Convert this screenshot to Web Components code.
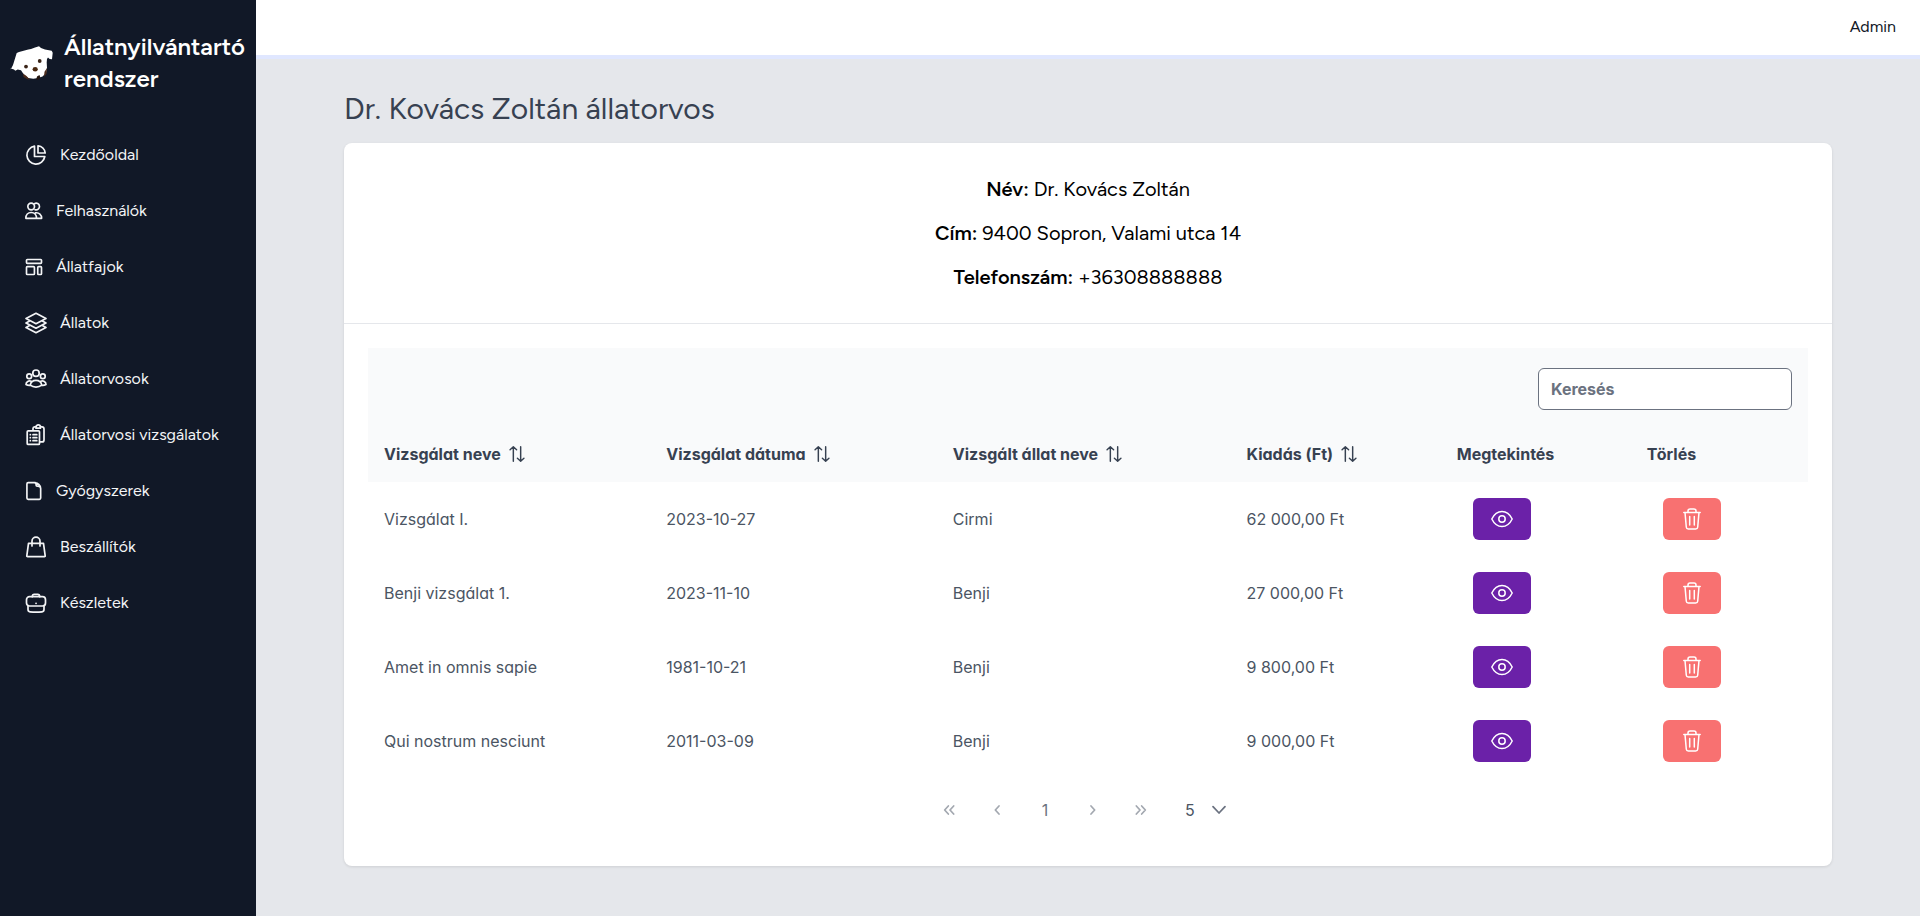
<!DOCTYPE html>
<html lang="hu">
<head>
<meta charset="utf-8">
<meta name="viewport" content="width=device-width, initial-scale=1">
<title>Állatnyilvántartó rendszer</title>
<style>
  html, body { margin: 0; height: 100%; }
  body { font-family: Figtree, Lato, sans-serif; font-size: 16px; line-height: 24px; color: #111827; background: #e5e7eb; }
</style>
</head>
<body>
<app-shell>
  <app-sidebar slot="sidebar">
    <span slot="brand">Állatnyilvántartó rendszer</span>
    <nav-item icon="pie">Kezdőoldal</nav-item>
    <nav-item icon="users" small>Felhasználók</nav-item>
    <nav-item icon="layout" small>Állatfajok</nav-item>
    <nav-item icon="layers">Állatok</nav-item>
    <nav-item icon="group">Állatorvosok</nav-item>
    <nav-item icon="clipboard">Állatorvosi vizsgálatok</nav-item>
    <nav-item icon="file" small>Gyógyszerek</nav-item>
    <nav-item icon="bag">Beszállítók</nav-item>
    <nav-item icon="case">Készletek</nav-item>
  </app-sidebar>
  <app-topbar slot="topbar">Admin</app-topbar>
  <page-title>Dr. Kovács Zoltán állatorvos</page-title>
  <content-card>
    <info-list slot="info">
      <info-line label="Név:">Dr. Kovács Zoltán</info-line>
      <info-line label="Cím:">9400 Sopron, Valami utca 14</info-line>
      <info-line label="Telefonszám:">+36308888888</info-line>
    </info-list>
    <exam-table></exam-table>
    <page-paginator></page-paginator>
  </content-card>
</app-shell>

<script>
const define = (name, html, setup) => {
  const template = document.createElement('template');
  template.innerHTML = html;
  customElements.define(name, class extends HTMLElement {
    constructor() {
      super();
      this.attachShadow({ mode: 'open' }).append(template.content.cloneNode(true));
    }
    connectedCallback() { if (setup) setup(this, this.shadowRoot); }
  });
};

const ICONS = {
  pie: '<path d="M10.5 3.2a9 9 0 1 0 10.3 10.3h-10.3z"/><path d="M14 2.8V10h7.2A8 8 0 0 0 14 2.8z"/>',
  users: '<circle cx="8.6" cy="6.6" r="4"/><path d="M12.6 3.2a4 4 0 1 1 .6 7.2M2.2 20.8c0-4.200 2.600-7 6.400-7s6.400 2.800 6.400 7zM13.800 14.200c4.200-.6 7.400 2.300 7.400 6.600H15"/>',
  layout: '<rect x="3" y="3" width="18" height="4.600" rx="1"/><rect x="3" y="11.500" width="9.500" height="9.500" rx="1"/><rect x="16.500" y="11.500" width="4.500" height="9.500" rx="1"/>',
  layers: '<path d="M12 2.300l10 5.200-10 5.200L2 7.500z"/><path d="M5.200 10.300L2 12l10 5.200L22 12l-3.200-1.700"/><path d="M5.200 14.800L2 16.500l10 5.200 10-5.200-3.200-1.700"/>',
  group: '<circle cx="12" cy="6.200" r="3.200"/><circle cx="5.200" cy="9.200" r="2.400"/><circle cx="18.800" cy="9.200" r="2.400"/><path d="M6.200 18.200a5.900 5.900 0 0 1 11.600 0c-3.300 2.600-8.300 2.600-11.600 0zM7.200 14.300c-2.300-1.100-5.200.4-5.200 3.300 1.200.7 2.700 1 4.200.8M16.800 14.300c2.300-1.100 5.200.4 5.200 3.300-1.200.7-2.700 1-4.200.8"/>',
  clipboard: '<path d="M9 7V5.600C9 4.500 9.800 3.900 10.700 3.800l1.300-.1M16.500 3.700l1.500.1c1.200.1 2 1 2 2.100v11c0 1.200-.9 2-2 2h-2"/><path d="M12 5.200V4.100a2.200 2.200 0 0 1 4.400 0v1.100z"/><rect x="3.200" y="7.800" width="12.300" height="13.600" rx="1"/><path d="M6.300 11.700h.1M6.300 14.700h.1M6.300 17.700h.1M9 11.700h3.800M9 14.700h3.800M9 17.700h3.800"/>',
  file: '<path d="M13.500 2H5a1.500 1.500 0 0 0-1.500 1.500v17A1.500 1.500 0 0 0 5 22h13.500a1.500 1.500 0 0 0 1.500-1.500V9M12.500 2c1.800 0 2.200 1 2.200 3.800C17.500 5.800 20 6 20 9c0-4-3.500-7-7.500-7z"/>',
  bag: '<path d="M8 11V6.200a4 4 0 0 1 8 0V11"/><path d="M4.500 8.300h15l1.700 12.500c.1.600-.3.900-.8.900H3.600c-.5 0-.9-.3-.8-.9z"/>',
  case: '<path d="M8.300 5.700c0-1.800.7-2.400 2-2.400h3.400c1.300 0 2 .6 2 2.400"/><rect x="2.500" y="5.700" width="19" height="9.300" rx="3"/><path d="M4 14.600v4c0 1.300.9 2.100 2 2.200 4 .5 8 .5 12 0 1.100-.1 2-.9 2-2.200v-4M12 12.300h.1"/>',
  eye: '<path d="M1.800 12C4 7.500 7.500 4.500 12 4.500s8 3 10.200 7.500C20 16.500 16.500 19.500 12 19.500S4 16.500 1.800 12z"/><circle cx="12" cy="12" r="3.200"/>',
  trash: '<path d="M3.800 5.500h16.400M8 5.200V4a2 2 0 0 1 2-2h4a2 2 0 0 1 2 2v1.200M5 5.500l1.300 14.700c.1 1.200.8 1.800 2 1.800h7.400c1.200 0 1.900-.6 2-1.800L19 5.500M9.700 9.500v8.500M14.300 9.500v8.500"/>',
  sort: '<path d="M6.500 22.800V1.400M1.600 5.600l4.900-4.400 4.900 4.400M17.500 1.200v21.400M12.600 18.400l4.900 4.400 4.900-4.400"/>',
  first: '<path d="M11 6l-5.500 6 5.500 6M19 6l-5.500 6 5.500 6"/>',
  prev: '<path d="M15 6l-5.500 6 5.500 6"/>',
  next: '<path d="M9 6l5.500 6L9 18"/>',
  last: '<path d="M5 6l5.500 6L5 18M13 6l5.500 6-5.500 6"/>',
  down: '<path d="M3 7l9 9.500L21 7"/>'
};

define('ui-icon', `
<style>
  :host { display: block; flex: none; width: var(--icon-size, 24px); height: var(--icon-size, 24px); }
  svg { display: block; width: 100%; height: 100%; overflow: visible; fill: none; stroke: currentColor; stroke-width: var(--icon-stroke, 1.5); stroke-linecap: round; stroke-linejoin: round; }
</style>
<svg viewBox="0 0 24 24" aria-hidden="true"></svg>`, (el, root) => {
  root.querySelector('svg').innerHTML = ICONS[el.getAttribute('name')];
});

define('app-shell', `
<style>
  :host { display: grid; grid-template-columns: 256px minmax(0, 1fr); min-height: 100%; }
  .page { display: flex; flex-direction: column; }
  main { box-sizing: border-box; width: 100%; max-width: 1536px; margin: 0 auto; padding: 32px 24px; }
</style>
<slot name="sidebar"></slot>
<div class="page"><slot name="topbar"></slot><main><slot></slot></main></div>`);

define('app-logo', `
<style>
  :host { display: block; flex: none; width: 44px; height: 36px; }
  svg { display: block; width: 100%; height: 100%; }
</style>
<svg viewBox="0 0 44 36" aria-hidden="true">
  <path fill="#fff" d="M1.700 24.500L4 20l3.700-12L10 7l9.300-2.400L22 4l4-1.500 4-1.300 2 1.800 4 1.500 6.700 1.200 1 2-.7 6.600-2.300-.3-1.700-1.500-1 1.500-.3 3.500.3 5.500-1 5-3.500 3.500-4.500 1.500-4.700.7-5-.8-4-2.600-3.300-5-3.300-.8-2.400 1.200-1.300-1.300-3.300-.9z"/>
  <path fill="#4b2a1a" d="M14 28.500l3.500 2.500 3.500 3.800-3-.8-3.500-2zM38 23l-.5 6-2.500 2.800.5-5z"/>
  <circle cx="17" cy="21.600" r="1.900" fill="#3a2418"/><circle cx="30.700" cy="16" r="1.900" fill="#3a2418"/>
  <ellipse cx="26.200" cy="24.300" rx="2.600" ry="2.200" fill="#4a2810"/><path fill="#24150e" d="M28 31.500l2.500-1.500.8 2.500-2 2.200-2-.2z"/>
</svg>`);

define('app-sidebar', `
<style>
  :host { display: block; background: #111827; color: #f3f4f6; }
  .brand { display: flex; align-items: center; gap: 11px; padding: 31px 9px 0; color: #fff; font-size: 24px; line-height: 32px; font-weight: 600; text-decoration: none; }
  nav { display: flex; flex-direction: column; gap: 8px; margin-top: 36px; }
</style>
<a class="brand" href="#"><app-logo></app-logo><slot name="brand"></slot></a>
<nav><slot></slot></nav>`);

define('nav-item', `
<style>
  :host { display: block; --icon-stroke: 1.7; }
  :host([small]) { --icon-size: 20px; --icon-stroke: 2; }
  a { display: flex; align-items: center; gap: 12px; padding: 12px 24px; color: inherit; text-decoration: none; }
</style>
<a href="#"><ui-icon></ui-icon><span><slot></slot></span></a>`, (el, root) => {
  const icon = document.createElement('ui-icon');
  icon.setAttribute('name', el.getAttribute('icon'));
  root.querySelector('ui-icon').replaceWith(icon);
});

define('app-topbar', `
<style>
  :host { display: flex; justify-content: flex-end; padding: 15px 24px 16px; background: #fff; border-bottom: 4px solid #e0e7ff; }
  button { border: 0; padding: 0; background: none; font: inherit; color: inherit; }
</style>
<button type="button"><slot></slot></button>`);

define('page-title', `
<style>
  :host { display: block; margin-bottom: 16px; }
  h1 { margin: 0; font-size: 30px; line-height: 36px; font-weight: 400; color: #374151; }
</style>
<h1><slot></slot></h1>`);

define('content-card', `
<style>
  :host { display: block; background: #fff; border-radius: 8px; box-shadow: 0 1px 3px rgba(0,0,0,.1); }
  .info { padding: 32px; border-bottom: 1px solid #e5e7eb; }
  .body { padding: 24px; }
</style>
<div class="info"><slot name="info"></slot></div>
<div class="body"><slot></slot></div>`);

define('info-list', `
<style>:host { display: flex; flex-direction: column; align-items: center; gap: 16px; font-size: 20px; line-height: 28px; color: #000; }</style>
<slot></slot>`);

define('info-line', `
<style>:host { display: block; } b { font-weight: 600; }</style>
<b></b> <slot></slot>`, (el, root) => {
  root.querySelector('b').textContent = el.getAttribute('label');
});

define('sort-header', `
<style>
  :host { display: block; }
  button { display: flex; align-items: center; gap: 8px; border: 0; padding: 0; background: none; font: inherit; color: inherit; --icon-size: 16px; --icon-stroke: 2.2; }
</style>
<button type="button"><slot></slot><ui-icon name="sort"></ui-icon></button>`);

define('row-action', `
<style>
  :host { display: block; padding: 0 16px; }
  button { display: grid; place-items: center; width: 58px; height: 42px; border: 0; border-radius: 6px; padding: 0; color: #fff; background: #6b21a8; --icon-size: 24px; }
  :host([kind="trash"]) button { background: #f87171; }
</style>
<button type="button"></button>`, (el, root) => {
  const kind = el.getAttribute('kind');
  const button = root.querySelector('button');
  button.setAttribute('aria-label', kind === 'trash' ? 'Törlés' : 'Megtekintés');
  button.innerHTML = `<ui-icon name="${kind}"></ui-icon>`;
});

const EXAMS = [
  ['Vizsgálat I.', '2023-10-27', 'Cirmi', '62 000,00 Ft'],
  ['Benji vizsgálat 1.', '2023-11-10', 'Benji', '27 000,00 Ft'],
  ['Amet in omnis sapie', '1981-10-21', 'Benji', '9 800,00 Ft'],
  ['Qui nostrum nesciunt', '2011-03-09', 'Benji', '9 000,00 Ft']
];

define('exam-table', `
<style>
  :host { display: block; font-family: Inter, sans-serif; font-feature-settings: "cv11"; color: #4b5563; }
  .tools { display: flex; justify-content: flex-end; padding: 20px 16px 16px; background: #f9fafb; }
  input { box-sizing: border-box; width: 254px; height: 42px; padding: 8px 12px; border: 1px solid #6b7280; border-radius: 6px; background: #fff; font: inherit; font-weight: 700; }
  input::placeholder { color: #6b7280; opacity: 1; }
  table { width: 100%; border-collapse: collapse; table-layout: fixed; }
  th { box-sizing: border-box; height: 56px; padding: 16px; background: #f9fafb; color: #374151; font-weight: 700; text-align: left; }
  td { padding: 16px; }
</style>
<div class="tools"><input type="text" placeholder="Keresés" aria-label="Keresés"></div>
<table>
  <colgroup><col style="width:19.6%"><col style="width:19.9%"><col style="width:20.4%"><col style="width:14.6%"><col style="width:13.2%"><col></colgroup>
  <thead><tr>
    <th><sort-header>Vizsgálat neve</sort-header></th>
    <th><sort-header>Vizsgálat dátuma</sort-header></th>
    <th><sort-header>Vizsgált állat neve</sort-header></th>
    <th><sort-header>Kiadás (Ft)</sort-header></th>
    <th>Megtekintés</th>
    <th>Törlés</th>
  </tr></thead>
  <tbody></tbody>
</table>`, (el, root) => {
  root.querySelector('tbody').innerHTML = EXAMS.map(row =>
    `<tr>${row.map(cell => `<td>${cell}</td>`).join('')}<td><row-action kind="eye"></row-action></td><td><row-action kind="trash"></row-action></td></tr>`).join('');
});

define('page-paginator', `
<style>
  :host { display: flex; justify-content: center; align-items: center; padding: 8px 0; font-family: Inter, sans-serif; color: #6b7280; --icon-size: 16px; --icon-stroke: 2.6; }
  button { display: grid; place-items: center; width: 48px; height: 48px; border: 0; padding: 0; background: none; font: inherit; color: inherit; }
  button:disabled { color: #a3a8b0; }
  .rows { display: grid; align-items: center; margin: 0 8px; color: #4b5563; }
  select, .rows ui-icon { grid-area: 1 / 1; }
  select { appearance: none; width: 70px; height: 48px; border: 0; padding: 0 12px; background: none; font: inherit; color: inherit; }
  .rows ui-icon { justify-self: end; margin-right: 16px; pointer-events: none; color: #6b7280; }
</style>
<button type="button" disabled aria-label="Első oldal"><ui-icon name="first"></ui-icon></button>
<button type="button" disabled aria-label="Előző oldal"><ui-icon name="prev"></ui-icon></button>
<button type="button">1</button>
<button type="button" disabled aria-label="Következő oldal"><ui-icon name="next"></ui-icon></button>
<button type="button" disabled aria-label="Utolsó oldal"><ui-icon name="last"></ui-icon></button>
<div class="rows"><select aria-label="Sorok száma"><option>5</option></select><ui-icon name="down"></ui-icon></div>`);
</script>
</body>
</html>
